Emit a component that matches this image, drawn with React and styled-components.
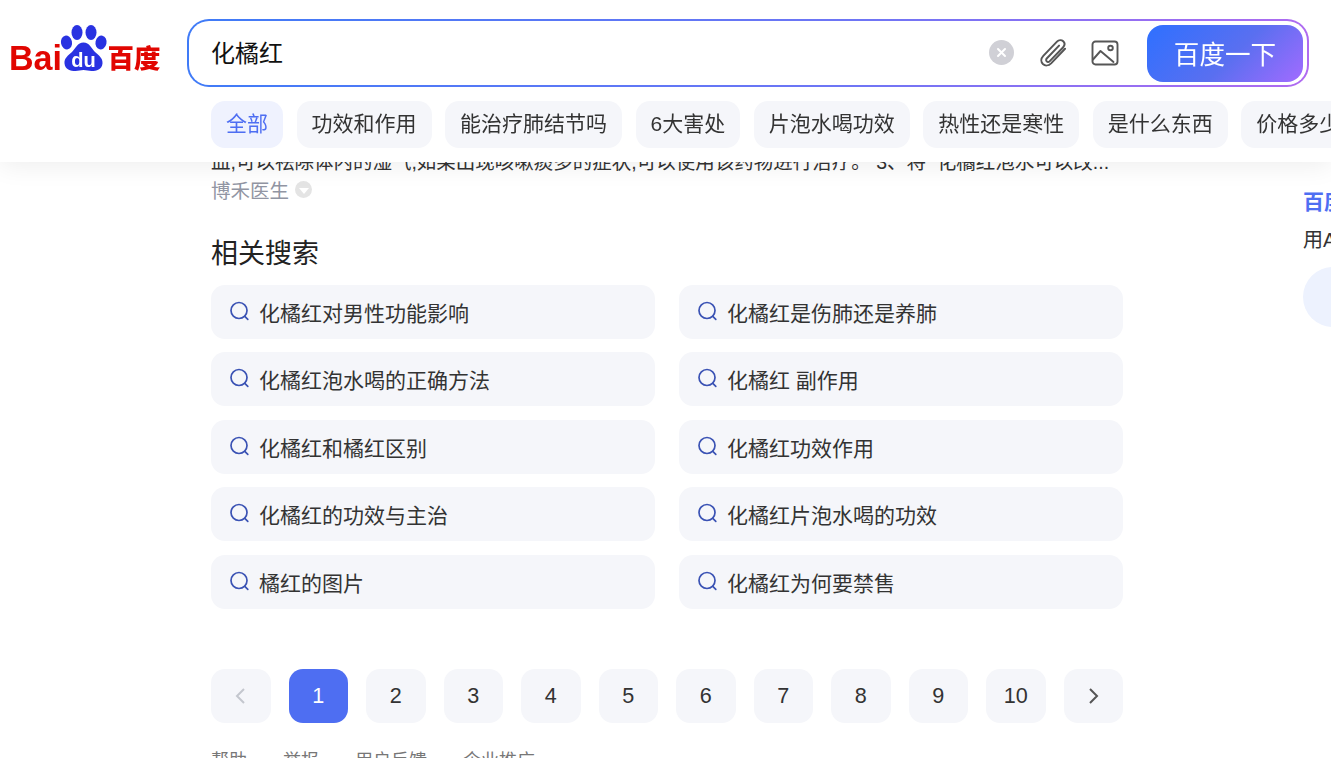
import React from "react";
import styled, { createGlobalStyle } from "styled-components";

const GlobalStyle = createGlobalStyle`
  html, body {
    margin: 0;
    padding: 0;
    height: 100%;
    overflow: hidden;
    background: #fff;
    font-family: "Liberation Sans", "Noto Sans CJK SC", sans-serif;
  }
  * {
    box-sizing: border-box;
  }
`;

const Header = styled.header`
  position: fixed;
  top: 0;
  left: 0;
  right: 0;
  height: 162px;
  background: #fff;
  box-shadow: 0 4px 24px rgba(0, 0, 0, 0.07);
  overflow: hidden;
  z-index: 10;
`;

const SearchRow = styled.div`
  display: flex;
  align-items: flex-start;
  padding: 19px 22px 0 9px;
`;

const LogoBox = styled.svg`
  flex: none;
  width: 152px;
  height: 48px;
  margin: 6px 27px 0 0;
  overflow: visible;
`;

const SearchBox = styled.div`
  flex: 1;
  height: 68px;
  margin-left: -1px;
  padding: 2px;
  border-radius: 22px;
  background: linear-gradient(100deg, #3f7bf7 0%, #6f75f5 60%, #b06af0 100%);
`;

const SearchInner = styled.div`
  height: 100%;
  display: flex;
  align-items: center;
  padding: 0 4px 0 22px;
  border-radius: 20px;
  background: #fff;
`;

const Query = styled.div`
  flex: 1;
  margin-top: -3px;
  font-size: 24px;
  color: #111;
`;

const ClearIcon = styled.div`
  width: 25px;
  height: 25px;
  border-radius: 50%;
  background: #d0d0d6;
  margin: -1px 25px 0 0;
  display: flex;
  align-items: center;
  justify-content: center;
`;

const ToolIcon = styled.svg`
  width: 28px;
  height: 28px;
  margin-right: ${(p) => p.$gap}px;
  fill: none;
  stroke: #565656;
  stroke-width: ${(p) => p.$stroke};
  stroke-linecap: round;
  stroke-linejoin: round;
`;

const SubmitButton = styled.button`
  width: 156px;
  height: 57px;
  border: none;
  border-radius: 16px;
  background: linear-gradient(135deg, #2e70ff 0%, #5a6ff0 55%, #a26bff 100%);
  color: #fff;
  font: inherit;
  font-size: 25.6px;
  padding: 0 0 2px;
`;

const TabRow = styled.nav`
  display: flex;
  gap: 13.5px;
  padding: 14px 0 0 211px;
  white-space: nowrap;
`;

const Tab = styled.div`
  flex: none;
  height: 47px;
  line-height: 46px;
  padding: 0 15px;
  border-radius: 14px;
  font-size: 21px;
  color: ${(p) => (p.$active ? "#4e6ef2" : "#333")};
  background: ${(p) => (p.$active ? "#eff2fe" : "#f5f6fa")};
`;

const Page = styled.div`
  display: flex;
  height: 758px;
  overflow: hidden;
  padding: 149px 0 0 211px;
`;

const Main = styled.main`
  flex: none;
  width: 912px;
`;

const Snippet = styled.p`
  margin: 0;
  height: 26px;
  line-height: 26px;
  font-size: 19.5px;
  color: #333;
  white-space: pre;
`;

const Source = styled.div`
  display: flex;
  align-items: center;
  height: 28px;
  font-size: 19.5px;
  color: #9195a3;
`;

const SourceToggle = styled.span`
  width: 17px;
  height: 17px;
  margin-left: 6px;
  border-radius: 50%;
  background: #e4e4e4;
  display: flex;
  align-items: center;
  justify-content: center;
  &::after {
    content: "";
    margin-top: 3px;
    border-left: 5px solid transparent;
    border-right: 5px solid transparent;
    border-top: 6px solid #fff;
  }
`;

const SectionTitle = styled.h3`
  margin: 32px 0 0;
  height: 38px;
  line-height: 38px;
  font-size: 27px;
  font-weight: 400;
  color: #222;
`;

const RelatedGrid = styled.div`
  display: grid;
  grid-template-columns: 444px 444px;
  grid-auto-rows: 54px;
  column-gap: 24px;
  row-gap: 13.5px;
  margin-top: 11.8px;
`;

const RelatedItem = styled.a`
  display: flex;
  align-items: center;
  gap: 9px;
  padding-left: 18px;
  border-radius: 14px;
  background: #f5f6fa;
  font-size: 21px;
  color: #333;
`;

const SearchGlyph = styled.svg`
  flex: none;
  width: 21px;
  height: 21px;
  margin-top: -1px;
  fill: none;
  stroke: #3a52b4;
  stroke-width: 1.7;
  stroke-linecap: round;
`;

const Pager = styled.div`
  display: flex;
  justify-content: space-between;
  margin-top: 60.2px;
`;

const PageButton = styled.div`
  width: 59.5px;
  height: 54px;
  border-radius: 14px;
  display: flex;
  align-items: center;
  justify-content: center;
  font-size: 21.6px;
  color: ${(p) => (p.$active ? "#fff" : "#333")};
  background: ${(p) => (p.$active ? "#4e6ef2" : "#f5f6fa")};
`;

const Chevron = styled.svg`
  width: 20px;
  height: 20px;
  fill: none;
  stroke: ${(p) => (p.$muted ? "#c4c7ce" : "#555")};
  stroke-width: 2;
`;

const Footer = styled.footer`
  display: flex;
  gap: 36px;
  margin-top: 25px;
  font-size: 18px;
  line-height: 26px;
  color: #777;
`;

const Aside = styled.aside`
  flex: none;
  margin-left: 180px;
  padding-top: 39px;
`;

const AsideTitle = styled.div`
  font-size: 21px;
  line-height: 28px;
  font-weight: 700;
  color: #4e6ef2;
  white-space: nowrap;
`;

const AsideText = styled.div`
  margin-top: 10px;
  font-size: 20px;
  line-height: 28px;
  color: #333;
  white-space: nowrap;
`;

const AsideBubble = styled.div`
  width: 60px;
  height: 60px;
  margin-top: 13px;
  border-radius: 50%;
  background: #edf2fe;
`;

const tabs = ["功效和作用", "能治疗肺结节吗", "6大害处", "片泡水喝功效", "热性还是寒性", "是什么东西", "价格多少钱"];

const related = [
  "化橘红对男性功能影响",
  "化橘红是伤肺还是养肺",
  "化橘红泡水喝的正确方法",
  "化橘红 副作用",
  "化橘红和橘红区别",
  "化橘红功效作用",
  "化橘红的功效与主治",
  "化橘红片泡水喝的功效",
  "橘红的图片",
  "化橘红为何要禁售",
];

const pages = [1, 2, 3, 4, 5, 6, 7, 8, 9, 10];

function Logo() {
  return (
    <LogoBox viewBox="0 0 152 48">
      <text
        x="0"
        y="45"
        fontFamily="Liberation Sans"
        fontWeight="700"
        fontSize="35"
        fill="#e10601"
        textLength="53"
        lengthAdjust="spacingAndGlyphs"
      >
        Bai
      </text>
      <ellipse cx="57.500" cy="17.500" rx="5.500" ry="7" fill="#2932e1" transform="rotate(-12 57.500 17.500)" />
      <ellipse cx="68" cy="7.500" rx="5.500" ry="7.500" fill="#2932e1" />
      <ellipse cx="82" cy="7.500" rx="5.500" ry="7.500" fill="#2932e1" />
      <ellipse cx="92" cy="17.500" rx="5.500" ry="7" fill="#2932e1" transform="rotate(12 92 17.500)" />
      <path
        d="M74.500 17.500c6 0 8 6 11.500 9.500 4 3.500 8 6.500 7.500 11.500-.5 6-6 7.500-11 7.500-3 0-5-1-8-1s-5 1-8 1c-5 0-10.500-1.500-11-7.500-.5-5 3.500-8 7.500-11.500 3.500-3.500 5.500-9.500 11.500-9.500z"
        fill="#2932e1"
      />
      <text x="74.500" y="42" textAnchor="middle" fontFamily="Liberation Sans" fontWeight="700" fontSize="20" fill="#fff">
        du
      </text>
      <text x="98.500" y="43" fontFamily="Noto Sans CJK SC" fontWeight="900" fontSize="26.500" fill="#e10601">
        百度
      </text>
    </LogoBox>
  );
}

function SearchIcon() {
  return (
    <SearchGlyph viewBox="0 0 21 21">
      <circle cx="10" cy="9.500" r="8" />
      <path d="M15.800 15.300l3 3" />
    </SearchGlyph>
  );
}

export default function App() {
  return (
    <>
      <GlobalStyle />
      <Header>
        <SearchRow>
          <Logo />
          <SearchBox>
            <SearchInner>
              <Query>化橘红</Query>
              <ClearIcon>
                <svg width="11" height="11" viewBox="0 0 11 11" fill="none" stroke="#fff" strokeWidth="2" strokeLinecap="round">
                  <path d="M2 2l7 7M9 2l-7 7" />
                </svg>
              </ClearIcon>
              <ToolIcon viewBox="3.500 2 21.500 21.500" $gap={24} $stroke={1.5}>
                <path d="M23.500 9.500 12.800 20.700c-2 2-4.700 2-6.300.5-1.700-1.700-1.600-4.300.3-6.300L17.300 4c1.400-1.400 3.500-1.500 4.800-.3 1.300 1.300 1.200 3.300-.2 4.800L11.800 19c-.8.800-1.800.8-2.400.2-.6-.6-.6-1.600.2-2.400l9.300-9.700" />
              </ToolIcon>
              <ToolIcon viewBox="0 0 28 28" $gap={28} $stroke={1.9}>
                <rect x="1.500" y="2.500" width="25" height="23" rx="3" />
                <circle cx="19.500" cy="9" r="2.300" />
                <path d="M2 20.500 9.500 12l13 11" />
              </ToolIcon>
              <SubmitButton>百度一下</SubmitButton>
            </SearchInner>
          </SearchBox>
        </SearchRow>
        <TabRow>
          <Tab $active>全部</Tab>
          {tabs.map((t) => (
            <Tab key={t}>{t}</Tab>
          ))}
        </TabRow>
      </Header>
      <Page>
        <Main>
          <Snippet>血,可以祛除体内的湿气,如果出现咳嗽痰多的症状,可以使用该药物进行治疗。 3、将  化橘红泡水可以改...</Snippet>
          <Source>
            博禾医生
            <SourceToggle />
          </Source>
          <SectionTitle>相关搜索</SectionTitle>
          <RelatedGrid>
            {related.map((r) => (
              <RelatedItem key={r}>
                <SearchIcon />
                {r}
              </RelatedItem>
            ))}
          </RelatedGrid>
          <Pager>
            <PageButton>
              <Chevron viewBox="0 0 20 20" $muted>
                <path d="M13 3l-7 7 7 7" />
              </Chevron>
            </PageButton>
            {pages.map((n) => (
              <PageButton key={n} $active={n === 1}>
                {n}
              </PageButton>
            ))}
            <PageButton>
              <Chevron viewBox="0 0 20 20">
                <path d="M7 3l7 7-7 7" />
              </Chevron>
            </PageButton>
          </Pager>
          <Footer>
            <span>帮助</span>
            <span>举报</span>
            <span>用户反馈</span>
            <span>企业推广</span>
          </Footer>
        </Main>
        <Aside>
          <AsideTitle>百度AI助手</AsideTitle>
          <AsideText>用AI帮你解答</AsideText>
          <AsideBubble />
        </Aside>
      </Page>
    </>
  );
}
